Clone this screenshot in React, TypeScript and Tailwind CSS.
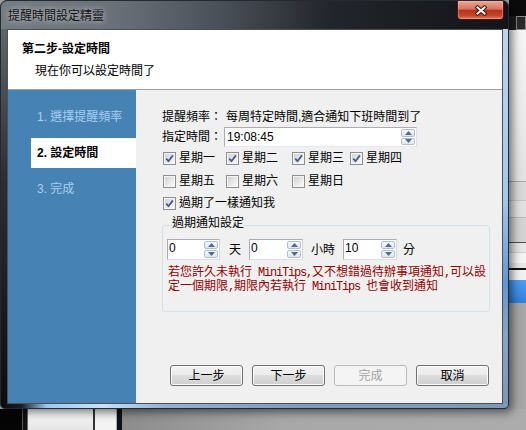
import React from 'react'

const ui = "font-['Liberation_Sans','Noto_Sans_CJK_TC',sans-serif] text-[12px] leading-[14px]"

function Check({ on }: { on?: boolean }) {
  return (
    <span className="w-[13px] h-[13px] shrink-0 flex border border-[#8e8f8f] bg-[#f6f6f6] p-[1px]">
      <span className="flex-1 flex items-center justify-center bg-[linear-gradient(135deg,#d2d2d2,#f9f9f9)]">
        {on && (
          <svg width="9" height="9" viewBox="0 0 9 9">
            <path d="M1.2 4.6 L3.5 7.2 L7.9 1.4" fill="none" stroke="#3f5b98" strokeWidth="1.8" />
          </svg>
        )}
      </span>
    </span>
  )
}

function CheckItem({ label, on, w }: { label: string; on?: boolean; w: string }) {
  return (
    <label className={`${w} flex items-center gap-[3px]`}>
      <Check on={on} />
      <span>{label}</span>
    </label>
  )
}

function Arrows() {
  return (
    <div className="w-[15px] shrink-0 flex flex-col gap-[1px] py-[1px] pr-[1px]">
      <div className="flex-1 flex items-center justify-center rounded-[2px] border border-[#b4bdca] bg-[linear-gradient(180deg,#f6f8fb,#dfe5ee)]">
        <svg width="7" height="4" viewBox="0 0 7 4">
          <path d="M0 4 L3.5 0 L7 4Z" fill="#4f6a94" />
        </svg>
      </div>
      <div className="flex-1 flex items-center justify-center rounded-[2px] border border-[#b4bdca] bg-[linear-gradient(180deg,#f6f8fb,#dfe5ee)]">
        <svg width="7" height="4" viewBox="0 0 7 4">
          <path d="M0 0 L3.5 4 L7 0Z" fill="#4f6a94" />
        </svg>
      </div>
    </div>
  )
}

function NumBox({ value, w }: { value: string; w: string }) {
  return (
    <div className={`${w} h-[21px] shrink-0 flex border border-[#a9adb5] border-b-[#d9dee5] border-r-[#d2d7df] bg-white`}>
      <span className="flex-1 pl-[1px] pt-[1px]">{value}</span>
      <Arrows />
    </div>
  )
}

function Btn({ children, disabled }: { children: React.ReactNode; disabled?: boolean }) {
  return disabled ? (
    <button className="w-[73px] h-[21px] rounded-[3px] border border-[#b8bcbf] bg-[#f4f4f4] text-[#a3a3a3]">
      {children}
    </button>
  ) : (
    <button className="w-[73px] h-[21px] rounded-[3px] border border-[#707070] shadow-[inset_0_0_0_1px_#fbfbfb] bg-[linear-gradient(180deg,#f2f2f2_0%,#ebebeb_50%,#dddddd_50%,#cfcfcf_100%)]">
      {children}
    </button>
  )
}

export default function App() {
  return (
    <div className={`w-[526px] h-[430px] overflow-hidden flex flex-col bg-[#a4a4a4] text-black ${ui}`}>
      <div className="flex h-[409px] shrink-0">
        {/* dialog window */}
        <div className="relative z-10 w-[509px] h-[409px] shrink-0 flex flex-col overflow-hidden rounded-t-[7px] rounded-b-[5px] border border-[#242a31] bg-[#1a1d22] shadow-[3px_3px_10px_rgba(0,0,0,0.55)]">
          {/* title bar */}
          <div className="h-[28px] shrink-0 flex items-start bg-[linear-gradient(90deg,#757b82_0%,#6b7179_22%,#474d54_45%,#22252b_65%,#121418_100%)]">
            <span className="pl-[7px] pt-[8px] text-[#111] [text-shadow:0_0_6px_rgba(255,255,255,0.8)]">提醒時間設定精靈</span>
            <button className="ml-auto mr-[4px] w-[47px] h-[19px] flex items-center justify-center rounded-b-[4px] border border-t-0 border-[#4a1710] bg-[linear-gradient(180deg,#e9a898_0%,#d6735d_45%,#b8321b_52%,#c4442a_80%,#dd7c5c_100%)] shadow-[inset_0_0_0_1px_rgba(255,200,180,0.35)]">
              <svg width="14" height="11" viewBox="0 0 14 11">
                <path d="M3.5 2.5 L10.5 8.5 M10.5 2.5 L3.5 8.5" stroke="#3a120c" strokeWidth="4" strokeLinecap="square" />
                <path d="M3.5 2.5 L10.5 8.5 M10.5 2.5 L3.5 8.5" stroke="#ffffff" strokeWidth="2" strokeLinecap="square" />
              </svg>
            </button>
          </div>

          <div className="flex flex-1">
            {/* left frame */}
            <div className="w-[6px] shrink-0 bg-[linear-gradient(180deg,#5f656c,#2b2e33_40%,#0c0d0f)]" />

            {/* client area */}
            <div className="w-[496px] shrink-0 flex flex-col border border-[#4c4f53]">
              <div className="h-[60px] shrink-0 bg-white border-b border-[#a0a0a0] pt-[12px]">
                <div className="pl-[14px] font-bold">第二步-設定時間</div>
                <div className="pl-[27px] mt-[8px]">現在你可以設定時間了</div>
              </div>

              <div className="flex flex-1">
                {/* steps */}
                <div className="w-[128px] shrink-0 bg-[#4682b4] pt-[20px]">
                  <div className="pl-[29px] text-[#a9cff2]">1. 選擇提醒頻率</div>
                  <div className="ml-[23px] mt-[14px] h-[30px] flex items-center bg-white pl-[6px] font-bold">2. 設定時間</div>
                  <div className="pl-[29px] mt-[14px] text-[#a9cff2]">3. 完成</div>
                </div>

                {/* content */}
                <div className="flex-1 flex flex-col bg-[#f0f0f0] pl-[26px] pt-[20px] pb-[17px]">
                  <div className="flex">
                    <span className="w-[62px]">提醒頻率：</span>
                    <span className="pl-[2px]">每周特定時間,適合通知下班時間到了</span>
                  </div>
                  <div className="flex items-center mt-[3px]">
                    <span className="w-[62px]">指定時間：</span>
                    <div className="w-[193px] h-[20px] flex border border-[#abadb3] border-b-[#e3e9ef] border-r-[#dbdfe6] bg-white">
                      <span className="flex-1 pl-[2px] self-center">19:08:45</span>
                      <Arrows />
                    </div>
                  </div>

                  <div className="flex h-[16px] items-center mt-[3px] pl-[1px]">
                    <CheckItem w="w-[63px]" label="星期一" on />
                    <CheckItem w="w-[66px]" label="星期二" on />
                    <CheckItem w="w-[58px]" label="星期三" on />
                    <CheckItem w="w-[70px]" label="星期四" on />
                  </div>
                  <div className="flex h-[16px] items-center mt-[7px] pl-[1px]">
                    <CheckItem w="w-[63px]" label="星期五" />
                    <CheckItem w="w-[66px]" label="星期六" />
                    <CheckItem w="w-[58px]" label="星期日" />
                  </div>
                  <div className="flex h-[16px] items-center mt-[6px] pl-[1px]">
                    <CheckItem w="w-[140px]" label="過期了一樣通知我" on />
                  </div>

                  <fieldset className="w-[328px] mt-[5px] rounded-[3px] border border-[#d5dfe5] pl-[4px] pb-[17px]">
                    <legend className="ml-[5px] pb-[4px]">過期通知設定</legend>
                    <div className="flex items-center mt-[5px]">
                      <NumBox w="w-[53px]" value="0" />
                      <span className="ml-[9px]">天</span>
                      <NumBox w="w-[54px] ml-[8px]" value="0" />
                      <span className="ml-[8px]">小時</span>
                      <NumBox w="w-[54px] ml-[8px]" value="10" />
                      <span className="ml-[6px]">分</span>
                    </div>
                    <p className="mt-[6px] ml-[1px] leading-[13px] text-[#960000] whitespace-nowrap">
                      若您許久未執行<span className="font-['Liberation_Mono'] tracking-[-1.2px]"> MiniTips,</span>又不想錯過待辦事項通知<span className="font-['Liberation_Mono'] tracking-[-1.2px]">,</span>可以設
                      <br />
                      定一個期限<span className="font-['Liberation_Mono'] tracking-[-1.2px]">,</span>期限內若執行<span className="font-['Liberation_Mono'] tracking-[-1.2px]"> MiniTips </span>也會收到通知
                    </p>
                  </fieldset>

                  <div className="mt-auto ml-[8px] flex gap-[9px]">
                    <Btn>上一步</Btn>
                    <Btn>下一步</Btn>
                    <Btn disabled>完成</Btn>
                    <Btn>取消</Btn>
                  </div>
                </div>
              </div>
            </div>

            {/* right frame */}
            <div className="w-[5px] shrink-0 bg-[linear-gradient(180deg,#bcd5ec,#a3c9ec_45%,#5f97d8_68%,#8aa6c4_82%,#7b97b7)]" />
          </div>

          {/* bottom frame */}
          <div className="h-[4px] shrink-0 bg-[linear-gradient(90deg,#0b0c0e_0%,#1a1d22_4%,#9fc6ee_9%,#cbe2f7_20%,#8fb2d6_32%,#7e9bbd_60%,#7f99b8_100%)]" />
        </div>

        {/* desktop behind, right side */}
        <div className="flex-1 flex flex-col">
          <div className="h-[16px] bg-[#0b0b0b]" />
          <div className="h-[14px] flex bg-[#1c1c1c]">
            <div className="ml-auto w-[10px] border border-[#8a8a8a] bg-[#2a2a2a]" />
          </div>
          <div className="h-[151px] bg-[linear-gradient(180deg,#f6f6f6,#e2e2e2)]" />
          <div className="h-[1px] bg-[#a8a8a8]" />
          <div className="h-[18px] bg-[#d9d9d9]" />
          <div className="h-[1px] bg-[#c4c4c4]" />
          <div className="h-[16px] bg-[#e1e1e1]" />
          <div className="h-[1px] bg-[#b8b8b8]" />
          <div className="h-[24px] bg-[#d3d3d3]" />
          <div className="h-[1px] bg-[#505050]" />
          <div className="h-[9px] bg-[#e6e6e6]" />
          <div className="h-[11px] bg-[#f4f4f4] border-t border-[#cfcfcf]" />
          <div className="h-[5px] bg-[#e8e8e8]" />
          <div className="h-[2px] bg-[#111]" />
          <div className="h-[10px] bg-[#f3f3f3]" />
          <div className="h-[23px] bg-[linear-gradient(180deg,#4c9df0,#2f80da)]" />
          <div className="flex-1 bg-[#a6a6a6]" />
        </div>
      </div>

      {/* desktop behind, bottom */}
      <div className="flex flex-1">
        <div className="w-[22px] bg-[#050505]" />
        <div className="w-[1px] bg-[#5a5a5a]" />
        <div className="w-[4px] bg-[#111]" />
        <div className="w-[1px] bg-[#6a6a6a]" />
        <div className="w-[65px] bg-[linear-gradient(180deg,#ffffff,#e4e4e4)]" />
        <div className="w-[2px] bg-[#333]" />
        <div className="w-[21px] bg-[#f3f3f3]" />
        <div className="w-[1px] bg-[#8fb6dc]" />
        <div className="w-[5px] bg-[#111]" />
        <div className="flex-1 bg-[linear-gradient(90deg,#8c8c8c,#a8a8a8_40%,#acacac)]" />
      </div>
    </div>
  )
}
